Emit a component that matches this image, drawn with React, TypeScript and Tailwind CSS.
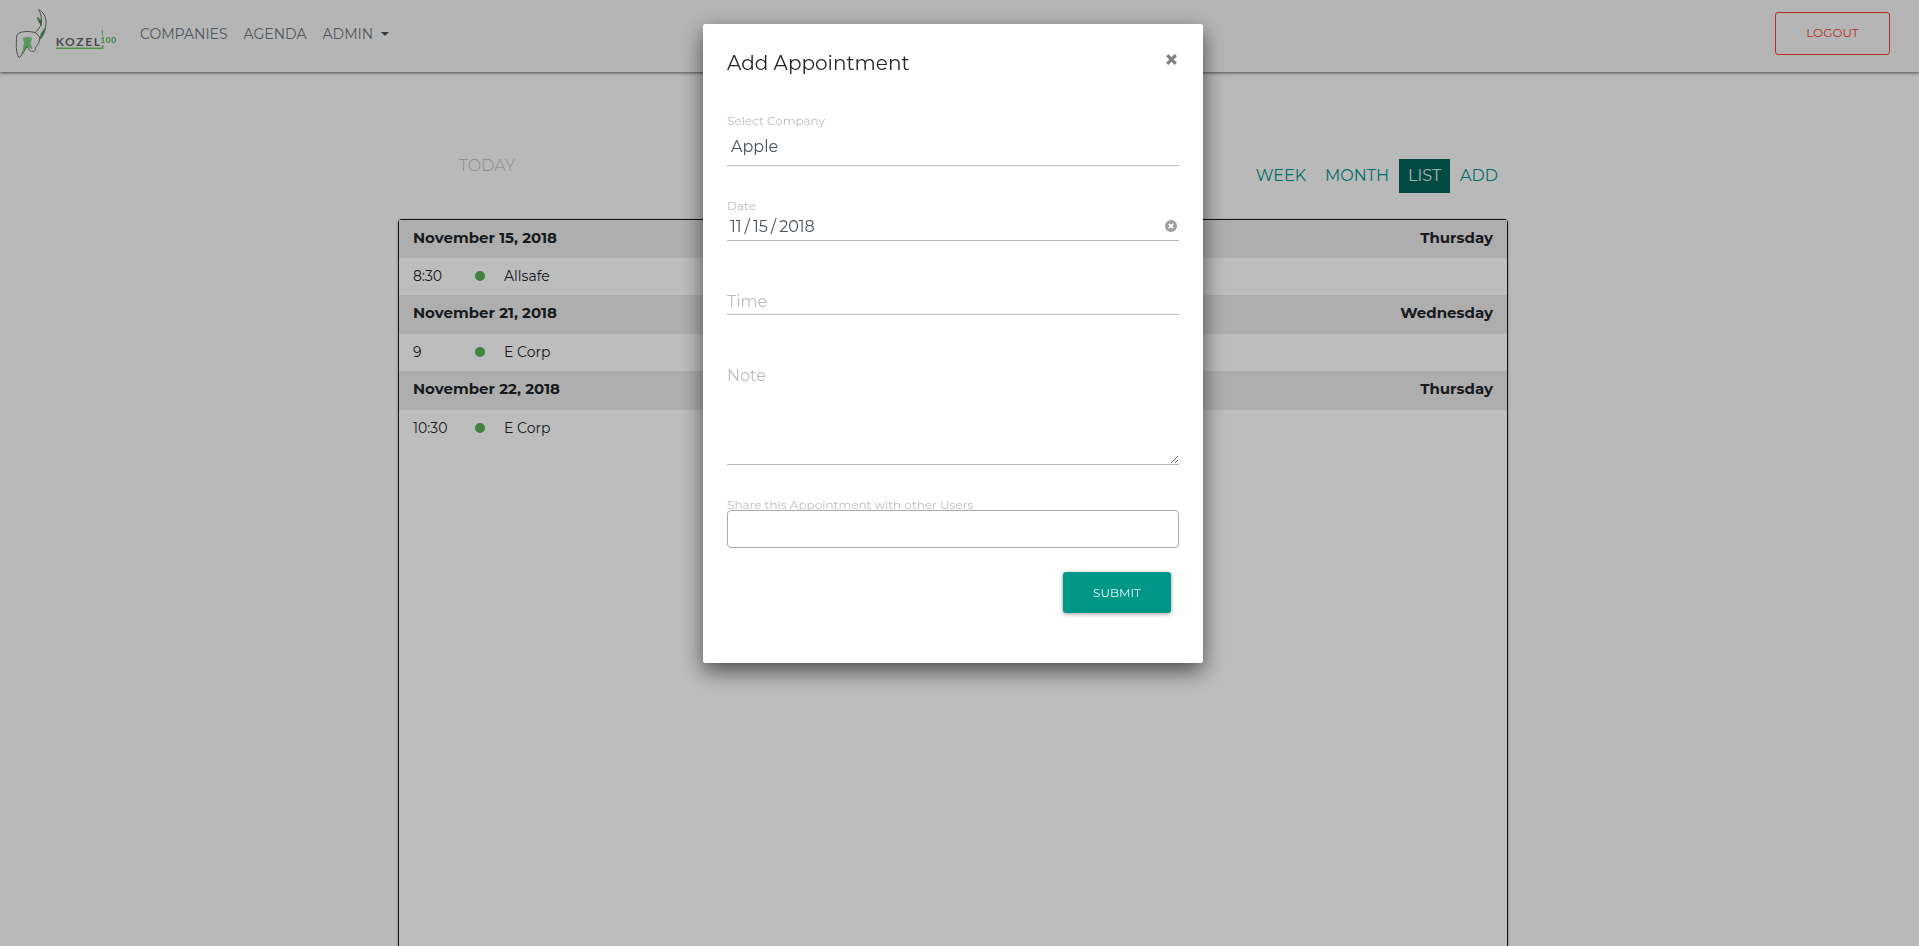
import { Fragment, useState } from "react";

const days = [
  { date: "November 15, 2018", weekday: "Thursday", time: "8:30", company: "Allsafe" },
  { date: "November 21, 2018", weekday: "Wednesday", time: "9", company: "E Corp" },
  { date: "November 22, 2018", weekday: "Thursday", time: "10:30", company: "E Corp" },
];

const views = ["WEEK", "MONTH", "LIST", "ADD"];

function Logo() {
  return (
    <svg viewBox="36 21 318 162" className="h-[54px] w-[106px]" role="img" aria-label="Kozel 100">
      <path d="M69 114q12-5 27-1l-4 18 5 17-6-3-8-7-11 14-13 20 9-22 4-20z" fill="#7ccc7c" />
      <path d="M113 51l6 5 6 5v16l-6-7z" fill="#3f9f45" />
      <path d="M135 80q0 22-16 38l3-17q9-10 13-21z" fill="#3f9f45" />
      <g fill="none" stroke="#6a6a6a" strokeWidth="3" strokeLinejoin="round" strokeLinecap="round">
        <path d="M106 98C88 92 64 94 54 101C48 105 50 116 49 128C48 148 50 163 57 173C66 168 72 152 82 139C87 145 88 154 95 154C104 157 107 150 106 142C114 136 117 128 119 119" />
        <path d="M106 98C118 86 126 74 124 58C124 46 121 38 116 29C130 35 138 50 138 67C138 88 131 108 119 119C120 110 114 103 106 98" />
        <path d="M113 52C113 62 117 69 124 73" />
      </g>
      <text x="167" y="138" fontSize="36" fontWeight="700" letterSpacing="5" fill="#666" className="font-['Lato',sans-serif]">KOZEL</text>
      <text x="301" y="130" fontSize="25" fontWeight="700" letterSpacing="2" fill="#4fb755" className="font-['Lato',sans-serif]">100</text>
      <path d="M168 144.500H308V135" fill="none" stroke="#6cc66c" strokeWidth="4.500" />
      <path d="M307 90V108" stroke="#6cc66c" strokeWidth="3" />
    </svg>
  );
}

function Navbar() {
  return (
    <header className="flex h-[72px] items-center bg-[#f5f5f5] pl-3 pr-[29px] shadow-[0_1px_3px_rgba(0,0,0,0.6)]">
      <a href="#home" className="-mt-1">
        <Logo />
      </a>
      <nav className="-mt-1 ml-[22px] flex flex-1 items-center gap-4 text-sm text-[#6c757d]">
        <a href="#companies">COMPANIES</a>
        <a href="#agenda">AGENDA</a>
        <button type="button" className="flex items-center gap-2">
          ADMIN
          <svg viewBox="0 0 8 4" className="h-1 w-2" fill="#495057" aria-hidden="true">
            <path d="M0 0h8L4 4z" />
          </svg>
        </button>
      </nav>
      <button type="button" className="-mt-1.5 h-[43px] w-[115px] rounded-[3px] border border-[#f44336] text-xs text-[#f44336]">
        LOGOUT
      </button>
    </header>
  );
}

function Agenda() {
  return (
    <main className="flex flex-1 flex-col pr-[13px]">
      <div className="mx-auto flex w-full max-w-[1110px] flex-1 flex-col">
        <div className="flex h-[147px] justify-between pl-[61px] pr-px pt-20 text-base">
          <button type="button" disabled className="h-7 font-light text-[#bdbdbd]">
            TODAY
          </button>
          <div className="mt-[7px] flex h-[34px] gap-px">
            {views.map((view) => (
              <button
                key={view}
                type="button"
                className={
                  view === "LIST"
                    ? "bg-[#006459] px-[9px] text-white/90"
                    : "px-[9px] text-[#009688]"
                }
              >
                {view}
              </button>
            ))}
          </div>
        </div>
        <div className="flex-1 rounded-t-sm border border-b-0 border-[#151719] bg-white shadow-[0_1px_3px_rgba(0,0,0,0.3)]">
          <table className="w-full border-collapse text-sm text-[#212529]">
            <tbody>
              {days.map((day) => (
                <Fragment key={day.date}>
                  <tr className="h-[39px] bg-[#ebebeb] text-[15px] first:h-[38px]">
                    <th colSpan={3} scope="colgroup" className="pb-[3px] pl-[14px] text-left font-bold">
                      {day.date}
                    </th>
                    <th className="pb-[3px] pr-[14px] text-right font-bold">{day.weekday}</th>
                  </tr>
                  <tr className="h-[37px]">
                    <td className="w-[62px] pb-px pl-[14px]">{day.time}</td>
                    <td className="w-[43px] pb-px pl-[14px]">
                      <span className="block size-[10px] rounded-full bg-[#56b058]" />
                    </td>
                    <td colSpan={2} className="pb-px">{day.company}</td>
                  </tr>
                </Fragment>
              ))}
            </tbody>
          </table>
        </div>
      </div>
    </main>
  );
}

function AppointmentDialog() {
  const [date, setDate] = useState("2018-11-15");

  return (
    <div className="fixed inset-0 overflow-hidden bg-black/26 pr-[13px] pt-6">
      <div
        role="dialog"
        aria-labelledby="dialog-title"
        className="mx-auto w-full max-w-[500px] rounded-xs bg-white px-6 pb-[50px] pt-6 shadow-[0_8px_22px_rgba(0,0,0,0.6)]"
      >
        <div className="flex items-start justify-between">
          <h2 id="dialog-title" className="text-xl leading-[30px] text-[#212529]">
            Add Appointment
          </h2>
          <button type="button" aria-label="Close" className="mr-0.5 mt-1.5 text-[#808080]">
            <svg viewBox="0 0 11 11" className="size-[11px]" stroke="currentColor" strokeWidth="3.200" aria-hidden="true">
              <path d="M1.200 1.200l8.600 8.600M9.800 1.200L1.200 9.800" />
            </svg>
          </button>
        </div>

        <form onSubmit={(event) => event.preventDefault()} className="text-base text-[#495057]">
          <div className="mt-[35px] border-b border-[#b8b8b8]">
            <label htmlFor="company" className="block text-xs leading-4 text-[#bdbdbd]">
              Select Company
            </label>
            <select id="company" className="block h-9 w-full appearance-none bg-transparent px-1">
              <option>Apple</option>
              <option>Allsafe</option>
              <option>E Corp</option>
            </select>
          </div>

          <div className="mt-8 border-b border-[#b8b8b8]">
            <label htmlFor="date" className="block text-xs leading-4 text-[#bdbdbd]">
              Date
            </label>
            <div className="flex h-[26px] items-center px-0.5">
              <input
                id="date"
                type="date"
                value={date}
                onChange={(event) => setDate(event.target.value)}
                className="min-w-0 flex-1 bg-transparent [&::-webkit-calendar-picker-indicator]:hidden [&::-webkit-datetime-edit-text]:px-0.5"
              />
              <button type="button" aria-label="Clear date" onClick={() => setDate("")} className="pb-0.5">
                <svg viewBox="0 0 12 12" className="size-3" aria-hidden="true">
                  <circle cx="6" cy="6" r="6" fill="#9e9e9e" />
                  <path d="M3.800 3.800l4.400 4.400M8.200 3.800L3.800 8.200" stroke="#fff" strokeWidth="1.800" />
                </svg>
              </button>
            </div>
          </div>

          <div className="relative mt-12 border-b border-[#b8b8b8]">
            <label htmlFor="time" className="pointer-events-none absolute left-0 top-0 leading-[26px] text-[#bdbdbd]">
              Time
            </label>
            <input id="time" type="text" className="block h-[25px] w-full bg-transparent" />
          </div>

          <div className="relative mt-12">
            <label htmlFor="note" className="pointer-events-none absolute left-0 top-0 leading-[26px] text-[#bdbdbd]">
              Note
            </label>
            <textarea id="note" className="block h-[102px] w-full resize-y border-b border-[#b8b8b8] bg-transparent" />
          </div>

          <div className="mt-8">
            <label htmlFor="share" className="block h-[13px] text-xs leading-4 text-[#bdbdbd]">
              Share this Appointment with other Users
            </label>
            <input id="share" type="text" className="relative block h-[38px] w-full rounded border border-[#aaa] bg-white px-2" />
          </div>

          <div className="mt-6 flex justify-end pr-2">
            <button
              type="submit"
              className="h-[41px] w-[108px] rounded-[3px] bg-[#009688] text-xs text-white/90 shadow-[0_1px_4px_rgba(0,0,0,0.4)]"
            >
              SUBMIT
            </button>
          </div>
        </form>
      </div>
    </div>
  );
}

export default function App() {
  return (
    <div className="flex min-h-screen flex-col bg-[#fafafa] font-['Montserrat','Inter','Liberation_Sans',sans-serif]">
      <Navbar />
      <Agenda />
      <AppointmentDialog />
    </div>
  );
}
